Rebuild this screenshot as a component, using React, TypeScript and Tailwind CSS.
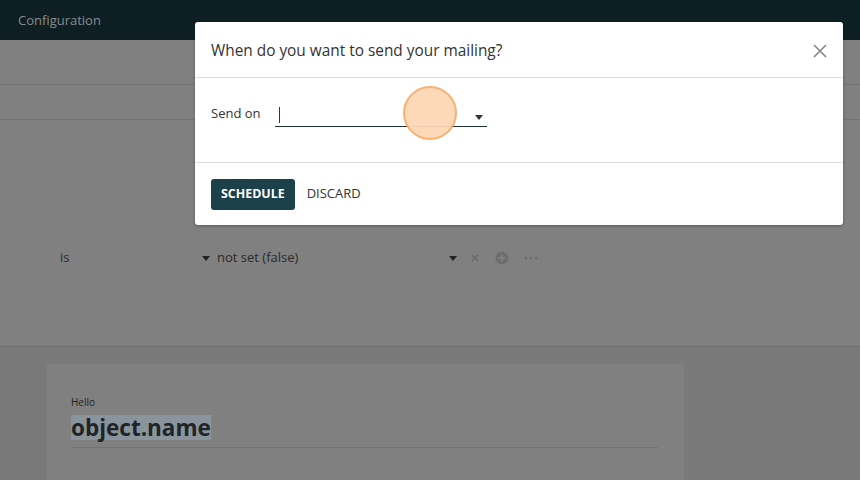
import React from "react";

export default function App() {
  const font = { fontFamily: '"Open Sans", "Noto Sans", sans-serif' };
  return (
    <div className="relative w-[860px] h-[480px] overflow-hidden bg-[#808080]" style={font}>
      {/* page (dimmed) */}
      <div className="flex flex-col h-full">
        <div className="h-[40px] shrink-0 bg-[#0e1f24] flex items-center px-[18px] pt-[1px]">
          <span className="text-[13px] text-[#868d90]">Configuration</span>
        </div>
        <div className="h-[45px] shrink-0 border-b border-[#737373]" />
        <div className="h-[35px] shrink-0 border-b border-[#737373]" />
        <div className="h-[227px] shrink-0 border-b border-[#727272] flex flex-col">
          <div className="mt-[127px] h-[22px] flex items-center text-[13px] text-[#2a2a2a]">
            <span className="ml-[60px] w-[142px]">is</span>
            <svg width="8" height="5" viewBox="0 0 8 5" className="mr-[7px]"><path d="M0 0h8L4 5z" fill="#222" /></svg>
            <span className="w-[232px]">not set (false)</span>
            <svg width="8" height="5" viewBox="0 0 8 5"><path d="M0 0h8L4 5z" fill="#222" /></svg>
            <svg width="10" height="10" viewBox="0 0 10 10" className="ml-[13px]"><path d="M2 2l6 6M8 2l-6 6" stroke="#6e6e6e" strokeWidth="1.8" /></svg>
            <svg width="14" height="14" viewBox="0 0 14 14" className="ml-[15px]"><circle cx="7" cy="7" r="6.5" fill="#6e6e6e" /><path d="M7 3.5v7M3.5 7h7" stroke="#808080" strokeWidth="2" /></svg>
            <svg width="14" height="4" viewBox="0 0 14 4" className="ml-[15px]"><circle cx="2" cy="2" r="1.5" fill="#6e6e6e" /><circle cx="7" cy="2" r="1.5" fill="#6e6e6e" /><circle cx="12" cy="2" r="1.5" fill="#6e6e6e" /></svg>
          </div>
        </div>
        <div className="flex-1 bg-[#797979] pt-[16px] pl-[46px]">
          <div className="w-[639px] h-full bg-[#808080] border border-[#7b7b7b] border-b-0 pt-[31px] px-[24px]">
            <div className="text-[10px] text-[#222] leading-[14px]">Hello</div>
            <div className="mt-[6px] w-[587px] border-b border-[#747474] pb-[5px]">
              <span className="inline-block bg-[#8a949c] text-[22.5px] font-bold text-[#1f2427] leading-[25px]">object.name</span>
            </div>
          </div>
        </div>
      </div>

      {/* modal */}
      <div className="absolute left-[195px] top-[22px] w-[648px] bg-white rounded-[3px] shadow-[0_1px_3px_rgba(0,0,0,0.3)] flex flex-col">
        <div className="h-[56px] border-b border-[#dedede] flex items-center justify-between pl-[16px] pr-[15px] pt-[2px]">
          <span className="text-[15.4px] text-[#333]">When do you want to send your mailing?</span>
          <svg width="16" height="16" viewBox="0 0 16 16"><path d="M2 2l12 12M14 2L2 14" stroke="#858585" strokeWidth="1.6" /></svg>
        </div>
        <div className="h-[85px] border-b border-[#dedede] flex items-start pl-[16px] pt-[26px] relative">
          <span className="text-[13px] text-[#333] w-[64px] leading-[18px]">Send on</span>
          <div className="w-[212px] h-[23px] border-b border-[#1f2f36] flex items-center justify-between">
            <div className="ml-[4px] w-px h-[16px] bg-[#333]" />
            <svg width="8" height="5" viewBox="0 0 8 5" className="mr-[4px] mt-[4px]"><path d="M0 0h8L4 5z" fill="#333" /></svg>
          </div>
          <div className="absolute left-[208px] top-[8px] w-[54px] h-[54px] rounded-full bg-[#fdd6b6] border-2 border-[#f8ad68] opacity-95" />
        </div>
        <div className="h-[62px] flex items-center pl-[16px] gap-[12px]">
          <button className="h-[31px] px-[10px] bg-[#1c414b] rounded-[3px] text-white text-[12.4px] font-bold">SCHEDULE</button>
          <span className="text-[13px] text-[#333]">DISCARD</span>
        </div>
      </div>
    </div>
  );
}
